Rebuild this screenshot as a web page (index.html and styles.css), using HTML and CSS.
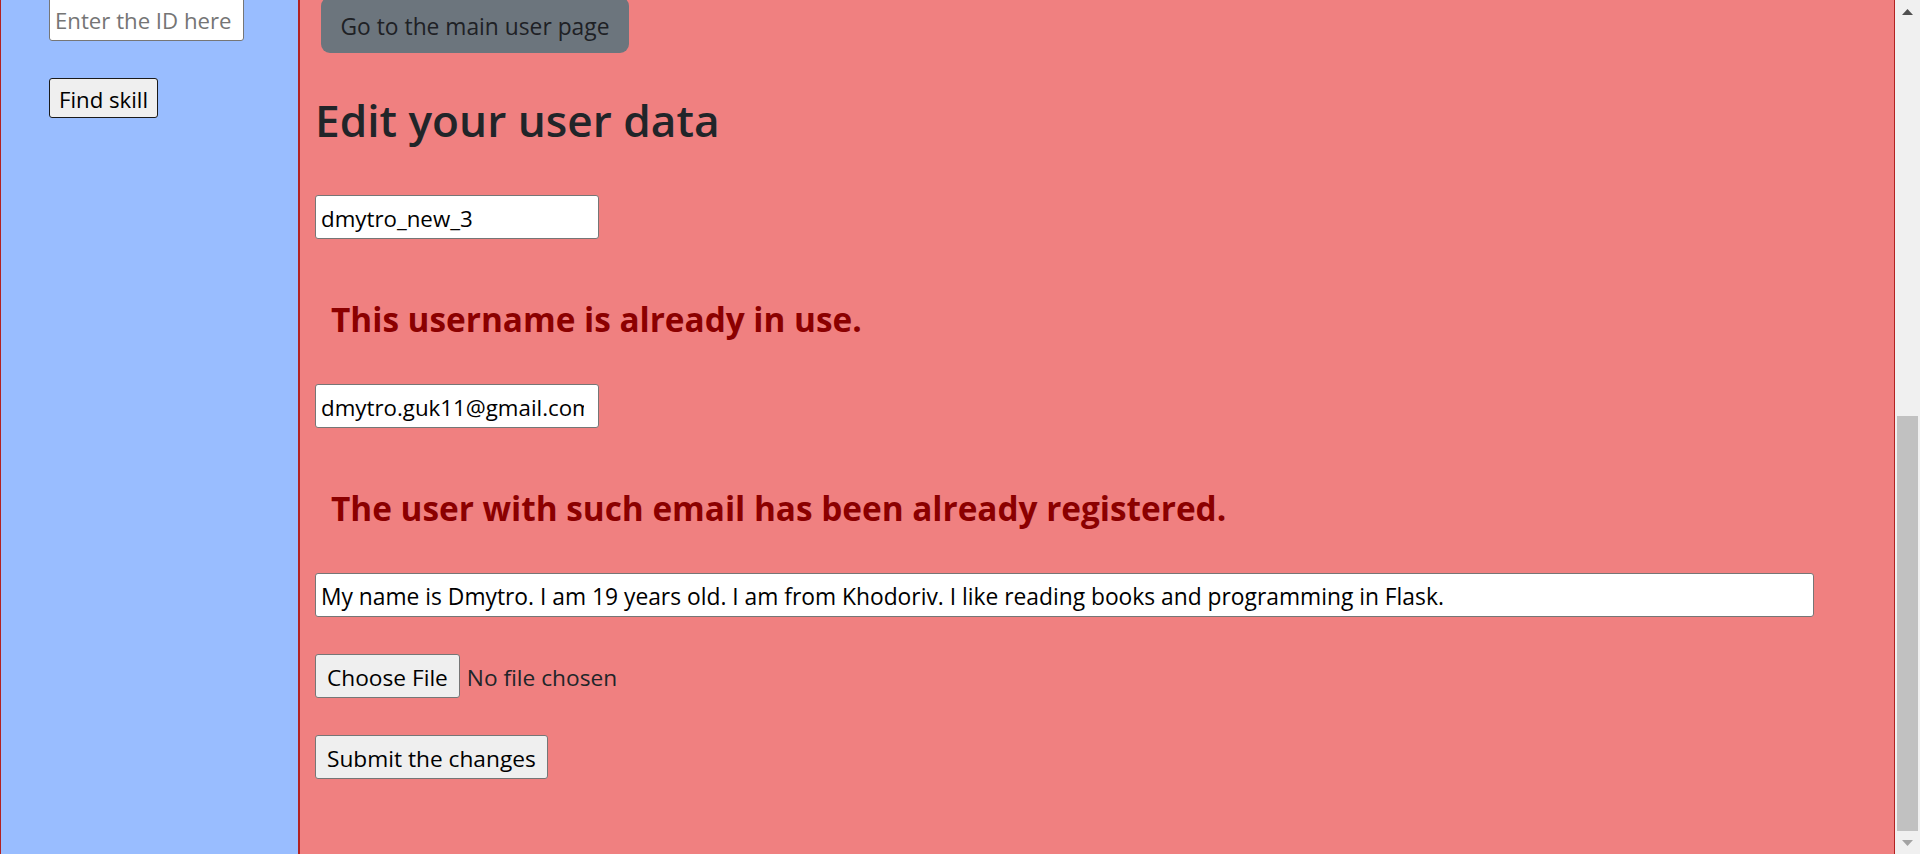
FILE: index.html
```html
<!DOCTYPE html>
<html lang="en">
<head>
<meta charset="utf-8">
<title>Edit your user data</title>
<link rel="stylesheet" href="styles.css">
</head>
<body>
<div class="viewport">
  <div class="app">
    <aside class="sidebar">
      <div class="sidebar-inner">
        <input class="id-input" type="text" placeholder="Enter the ID here">
        <button class="find-btn" type="button">Find skill</button>
      </div>
    </aside>
    <main class="main">
      <div class="main-inner">
        <a class="back-btn">Go to the main user page</a>
        <h1 class="title">Edit your user data</h1>
        <input class="field field-short" type="text" value="dmytro_new_3">
        <h3 class="error">This username is already in use.</h3>
        <input class="field field-short field-email" type="text" value="dmytro.guk11@gmail.com">
        <h3 class="error">The user with such email has been already registered.</h3>
        <input class="field field-long" type="text" value="My name is Dmytro. I am 19 years old. I am from Khodoriv. I like reading books and programming in Flask.">
        <div class="file-row"><span class="native-btn">Choose File</span><span class="file-label">No file chosen</span></div>
        <button class="native-btn submit-btn" type="button">Submit the changes</button>
      </div>
    </main>
  </div>
  <div class="scrollbar">
    <div class="sb-btn"><svg class="sb-arrow up" width="11" height="6" viewBox="0 0 11 6"><polygon points="0,6 5.5,0 11,6"/></svg></div>
    <div class="sb-track"><div class="sb-thumb"></div></div>
    <div class="sb-btn"><svg class="sb-arrow down" width="11" height="6" viewBox="0 0 11 6"><polygon points="0,0 11,0 5.5,6"/></svg></div>
  </div>
</div>
</body>
</html>
```
FILE: styles.css
```css
* { box-sizing: border-box; }
html, body { margin: 0; height: 100%; }
body {
  font-family: "Open Sans", sans-serif;
  color: #212529;
  overflow: hidden;
  background: #f0f0f0;
}
.viewport { display: flex; height: 854px; overflow: hidden; }
.app { flex: 1; display: flex; min-width: 0; }

.sidebar {
  flex: none;
  width: 299px;
  background: #99bdff;
  border-left: 1px solid #b22222;
  border-right: 1px solid #b22222;
  overflow: hidden;
}
.sidebar-inner {
  margin-top: -3px;
  padding-left: 48px;
  display: flex;
  flex-direction: column;
  align-items: flex-start;
}
.id-input {
  width: 195px;
  height: 44px;
  margin: 0;
  padding: 3px 4px 0 5px;
  border: 1px solid #767676;
  border-radius: 3px;
  background: #fff;
  font: 22.2px "Open Sans", sans-serif;
  color: #000;
}
.id-input::placeholder { color: #757575; }
.find-btn {
  margin: 37px 0 0;
  height: 40px;
  padding: 2px 9px 0;
  border: 1px solid #1a1a1a;
  border-radius: 3px;
  background: #efefef;
  font: 22.2px "Open Sans", sans-serif;
  color: #000;
}

.main {
  flex: 1;
  min-width: 0;
  background: #f08080;
  border-left: 1px solid #b22222;
  border-right: 1px solid #b22222;
  overflow: hidden;
}
.main-inner {
  margin-top: -3px;
  padding-left: 15px;
  display: flex;
  flex-direction: column;
  align-items: flex-start;
}
.back-btn {
  display: block;
  margin-left: 6px;
  width: 308px;
  height: 56px;
  padding: 12px 0 8px;
  line-height: 36px;
  text-align: center;
  background: #6c757d;
  border-radius: 9px;
  font-size: 22.8px;
  color: #1e2125;
}
.title {
  margin: 37px 0 45px;
  height: 60px;
  line-height: 60px;
  font-size: 44.2px;
  font-weight: 600;
  color: #212529;
}
.field {
  display: block;
  height: 44px;
  margin: 0;
  padding: 3px 4px 0 5px;
  border: 1px solid #767676;
  border-radius: 3px;
  background: #fff;
  font: 22.3px "Open Sans", sans-serif;
  color: #000;
}
.field-short { width: 284px; }
.field-email { padding-right: 14px; }
.field-long { width: 1499px; font-size: 22.8px; }
.error {
  margin: 55px 0 40px;
  padding-left: 16px;
  height: 50px;
  line-height: 50px;
  font-size: 33.35px;
  font-weight: 700;
  color: #8b0000;
}
.file-row {
  display: flex;
  align-items: center;
  margin-top: 37px;
}
.native-btn {
  display: inline-flex;
  align-items: center;
  height: 44px;
  margin: 0;
  padding: 3px 11px 0;
  border: 1px solid #767676;
  border-radius: 3px;
  background: #efefef;
  font: 22.7px "Open Sans", sans-serif;
  color: #000;
}
.file-label {
  margin-left: 7px;
  padding-top: 3px;
  font-size: 22.7px;
  color: #212529;
}
.submit-btn { margin-top: 37px; }

.scrollbar {
  flex: none;
  width: 25px;
  background: #f0f0f0;
  display: flex;
  flex-direction: column;
}
.sb-btn {
  height: 23px;
  display: flex;
  justify-content: center;
  padding-top: 9px;
}
.sb-arrow { display: block; }
.sb-arrow.up { fill: #505050; }
.sb-arrow.down { fill: #a3a3a3; }
.sb-track {
  flex: 1;
  display: flex;
  flex-direction: column;
  justify-content: flex-end;
  padding: 0 2px;
}
.sb-thumb { height: 415px; background: #c1c1c1; }
```
